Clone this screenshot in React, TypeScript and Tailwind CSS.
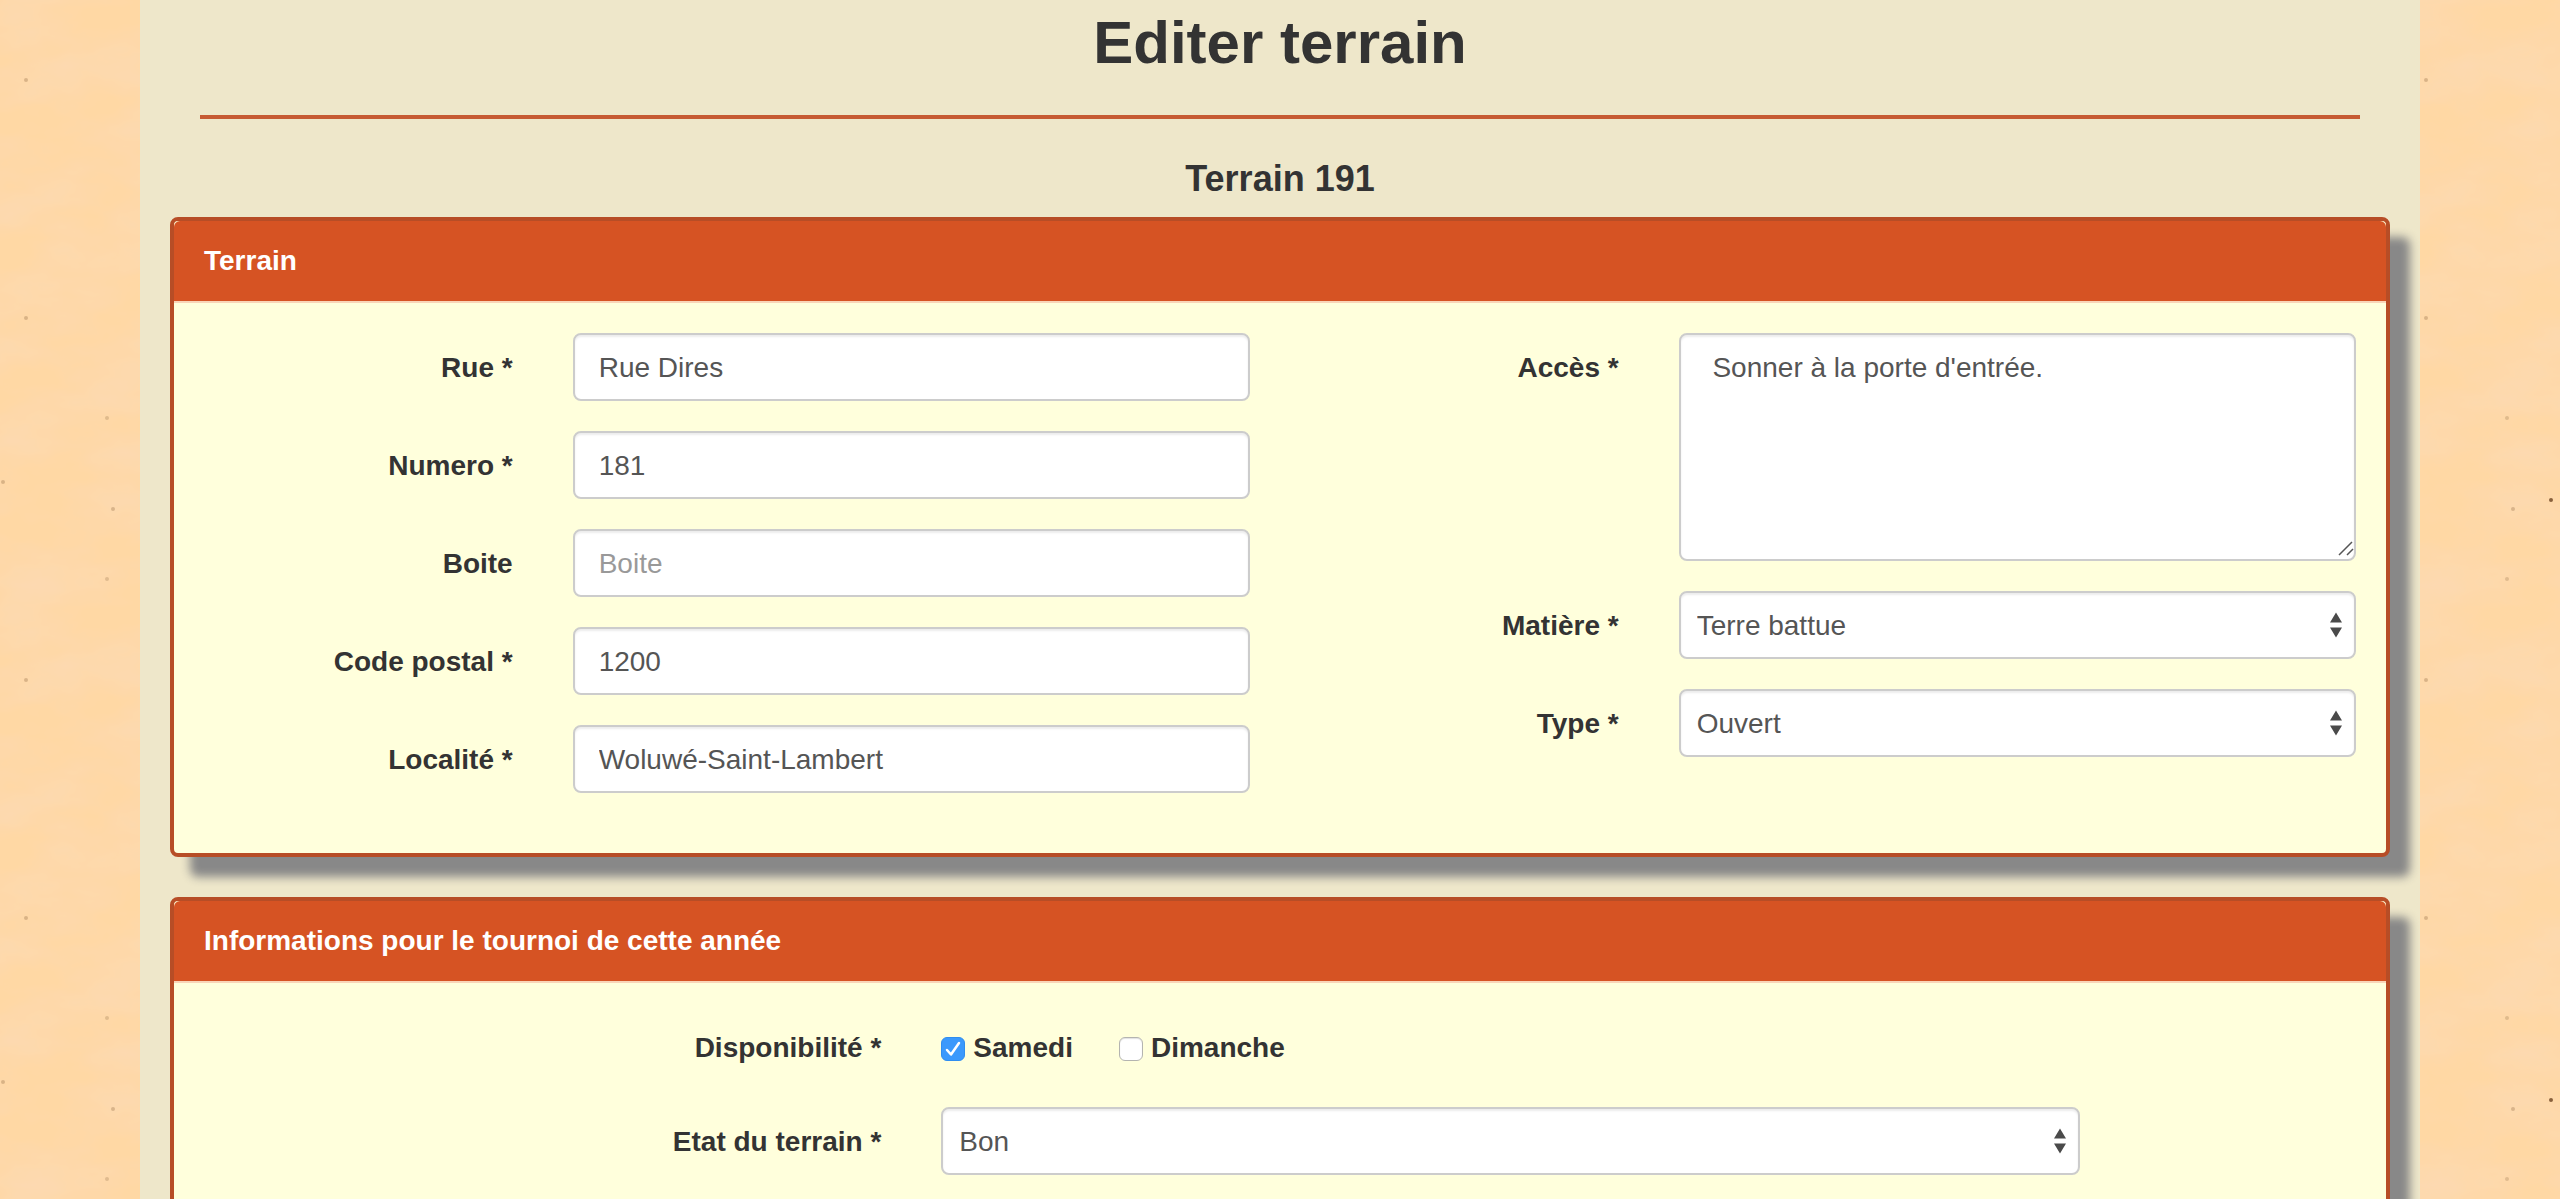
import { useState, type ReactNode } from "react";

const SPECKS = [
  { x: 26, y: 80, r: 2, o: 0.25 },
  { x: 26, y: 318, r: 2, o: 0.25 },
  { x: 107, y: 418, r: 2, o: 0.2 },
  { x: 3, y: 482, r: 2, o: 0.25 },
  { x: 113, y: 509, r: 2, o: 0.25 },
  { x: 107, y: 579, r: 2, o: 0.2 },
  { x: 151, y: 500, r: 2, o: 0.8 },
];

function PaperTexture() {
  return (
    <svg aria-hidden="true" className="absolute inset-0 h-full w-full">
      <defs>
        <filter id="grain" x="0" y="0" width="100%" height="100%">
          <feTurbulence type="fractalNoise" baseFrequency="0.012 0.022" numOctaves="4" seed="11" stitchTiles="stitch" />
          <feColorMatrix values="0 0 0 0 0.96  0 0 0 0 0.7  0 0 0 0 0.5  0.9 0 0 0 -0.28" />
        </filter>
        <pattern id="paper" width="600" height="600" patternUnits="userSpaceOnUse">
          <rect width="600" height="600" fill="#ffd8a4" />
          <rect width="600" height="600" filter="url(#grain)" />
          {SPECKS.map((s) => (
            <circle key={`${s.x}-${s.y}`} cx={s.x} cy={s.y} r={s.r} fill="#6b4420" opacity={s.o} />
          ))}
        </pattern>
      </defs>
      <rect width="100%" height="100%" fill="url(#paper)" />
    </svg>
  );
}

const control =
  "block w-full rounded-lg border-2 border-[#ccc] bg-white text-[28px] leading-10 text-[#555] shadow-[inset_0_2px_2px_rgba(0,0,0,0.075)] outline-none placeholder:text-[#999] placeholder:opacity-100 focus:border-[#66afe9]";

function Panel({ title, children }: { title: string; children: ReactNode }) {
  return (
    <section className="mb-10 rounded-lg border-4 border-[#b74d26] bg-[#ffffdc] shadow-[20px_20px_10px_#888]">
      <h4 className="rounded-t-md bg-[#d65323] px-[30px] py-5 text-[28px] leading-10 font-bold text-white">{title}</h4>
      <div className="border-t-2 border-[#f9d5b8] py-[30px]">{children}</div>
    </section>
  );
}

function FieldLabel({ id, children }: { id: string; children: ReactNode }) {
  return (
    <label htmlFor={id} className="px-[30px] pt-[15px] text-right text-[28px] leading-10 font-bold text-[#333]">
      {children}
    </label>
  );
}

function Row({ id, label, children }: { id: string; label: string; children: ReactNode }) {
  return (
    <div className="mb-[30px] grid grid-cols-3">
      <FieldLabel id={id}>{label}</FieldLabel>
      <div className="col-span-2 px-[30px]">{children}</div>
    </div>
  );
}

function TextField({ id, value, placeholder }: { id: string; value?: string; placeholder?: string }) {
  return (
    <input
      id={id}
      type="text"
      defaultValue={value}
      placeholder={placeholder}
      className={`${control} h-[68px] px-6 pt-0.5`}
    />
  );
}

function SelectField({ id, options }: { id: string; options: string[] }) {
  return (
    <div className="relative">
      <select id={id} className={`${control} h-[68px] appearance-none pt-0.5 pr-10 pl-4`}>
        {options.map((o) => (
          <option key={o}>{o}</option>
        ))}
      </select>
      <svg
        aria-hidden="true"
        viewBox="0 0 12 26"
        className="pointer-events-none absolute top-[21px] right-[14px] h-[26px] w-3 fill-[#4a4a4a]"
      >
        <path d="M6 0.5 12 10.5H0ZM0 15.5H12L6 25.5Z" />
      </svg>
    </div>
  );
}

function CheckField({ id, label, initial }: { id: string; label: string; initial: boolean }) {
  const [checked, setChecked] = useState(initial);
  return (
    <label htmlFor={id} className="flex items-center gap-2 text-[28px] leading-10 font-bold text-[#333]">
      <span className="relative mt-0.5 block h-6 w-6">
        <input
          id={id}
          type="checkbox"
          checked={checked}
          onChange={(e) => setChecked(e.target.checked)}
          className="block h-6 w-6 appearance-none rounded-md border border-[#b4b4b0] bg-white shadow-[inset_0_1px_1px_rgba(0,0,0,0.12)] checked:border-[#2f8df0] checked:bg-[#3b99fc] checked:shadow-none"
        />
        {checked && (
          <svg
            aria-hidden="true"
            viewBox="0 0 24 24"
            className="pointer-events-none absolute inset-0 h-6 w-6 fill-none stroke-white stroke-[2.5]"
          >
            <path d="M6 13 10 17.5 18 6" strokeLinecap="round" strokeLinejoin="round" />
          </svg>
        )}
      </span>
      {label}
    </label>
  );
}

export default function App() {
  return (
    <div className="h-screen overflow-y-auto font-['Liberation_Sans',Arial,sans-serif] text-[#333] [scrollbar-width:none]">
      <div className="relative min-h-full">
        <PaperTexture />
        <main className="relative mx-auto max-w-[2280px] bg-[#eee7ca] px-[30px] pt-[10px] pb-10">
          <h2 className="text-center text-[60px] leading-[66px] font-bold">Editer terrain</h2>
          <hr className="mx-[30px] mt-[39px] border-t-4 border-[#c65b33]" />
          <h3 className="mt-10 mb-[18px] text-center text-[36px] leading-10 font-bold">Terrain 191</h3>

          <form>
            <Panel title="Terrain">
              <div className="grid grid-cols-2">
                <div>
                  <Row id="rue" label="Rue *">
                    <TextField id="rue" value="Rue Dires" />
                  </Row>
                  <Row id="numero" label="Numero *">
                    <TextField id="numero" value="181" />
                  </Row>
                  <Row id="boite" label="Boite">
                    <TextField id="boite" placeholder="Boite" />
                  </Row>
                  <Row id="code" label="Code postal *">
                    <TextField id="code" value="1200" />
                  </Row>
                  <Row id="localite" label="Localité *">
                    <TextField id="localite" value="Woluwé-Saint-Lambert" />
                  </Row>
                </div>
                <div>
                  <Row id="acces" label="Accès *">
                    <div className="relative">
                      <textarea
                        id="acces"
                        defaultValue=" Sonner à la porte d'entrée."
                        className={`${control} h-[228px] resize-none px-6 py-[13px]`}
                      />
                      <svg
                        aria-hidden="true"
                        viewBox="0 0 16 20"
                        className="pointer-events-none absolute right-0.5 bottom-0.5 h-5 w-4 fill-none stroke-[#555] stroke-[1.5]"
                      >
                        <path d="M1 16 14 3M9 16 15 10" />
                      </svg>
                    </div>
                  </Row>
                  <Row id="matiere" label="Matière *">
                    <SelectField id="matiere" options={["Terre battue", "Béton", "Gazon"]} />
                  </Row>
                  <Row id="type" label="Type *">
                    <SelectField id="type" options={["Ouvert", "Couvert"]} />
                  </Row>
                </div>
              </div>
            </Panel>

            <Panel title="Informations pour le tournoi de cette année">
              <div role="group" aria-labelledby="disponibilite" className="mb-[30px] grid h-16 grid-cols-3">
                <span
                  id="disponibilite"
                  className="px-[30px] pt-[15px] text-right text-[28px] leading-10 font-bold"
                >
                  Disponibilité *
                </span>
                <div className="col-span-2 flex items-start gap-[46px] px-[30px] pt-[15px]">
                  <CheckField id="samedi" label="Samedi" initial={true} />
                  <CheckField id="dimanche" label="Dimanche" initial={false} />
                </div>
              </div>
              <div className="mb-[30px] grid grid-cols-24">
                <label
                  htmlFor="etat"
                  className="col-span-8 px-[30px] pt-[15px] text-right text-[28px] leading-10 font-bold"
                >
                  Etat du terrain *
                </label>
                <div className="col-span-13 px-[30px]">
                  <SelectField id="etat" options={["Bon", "Moyen", "Mauvais"]} />
                </div>
              </div>
            </Panel>
          </form>
        </main>
      </div>
    </div>
  );
}
